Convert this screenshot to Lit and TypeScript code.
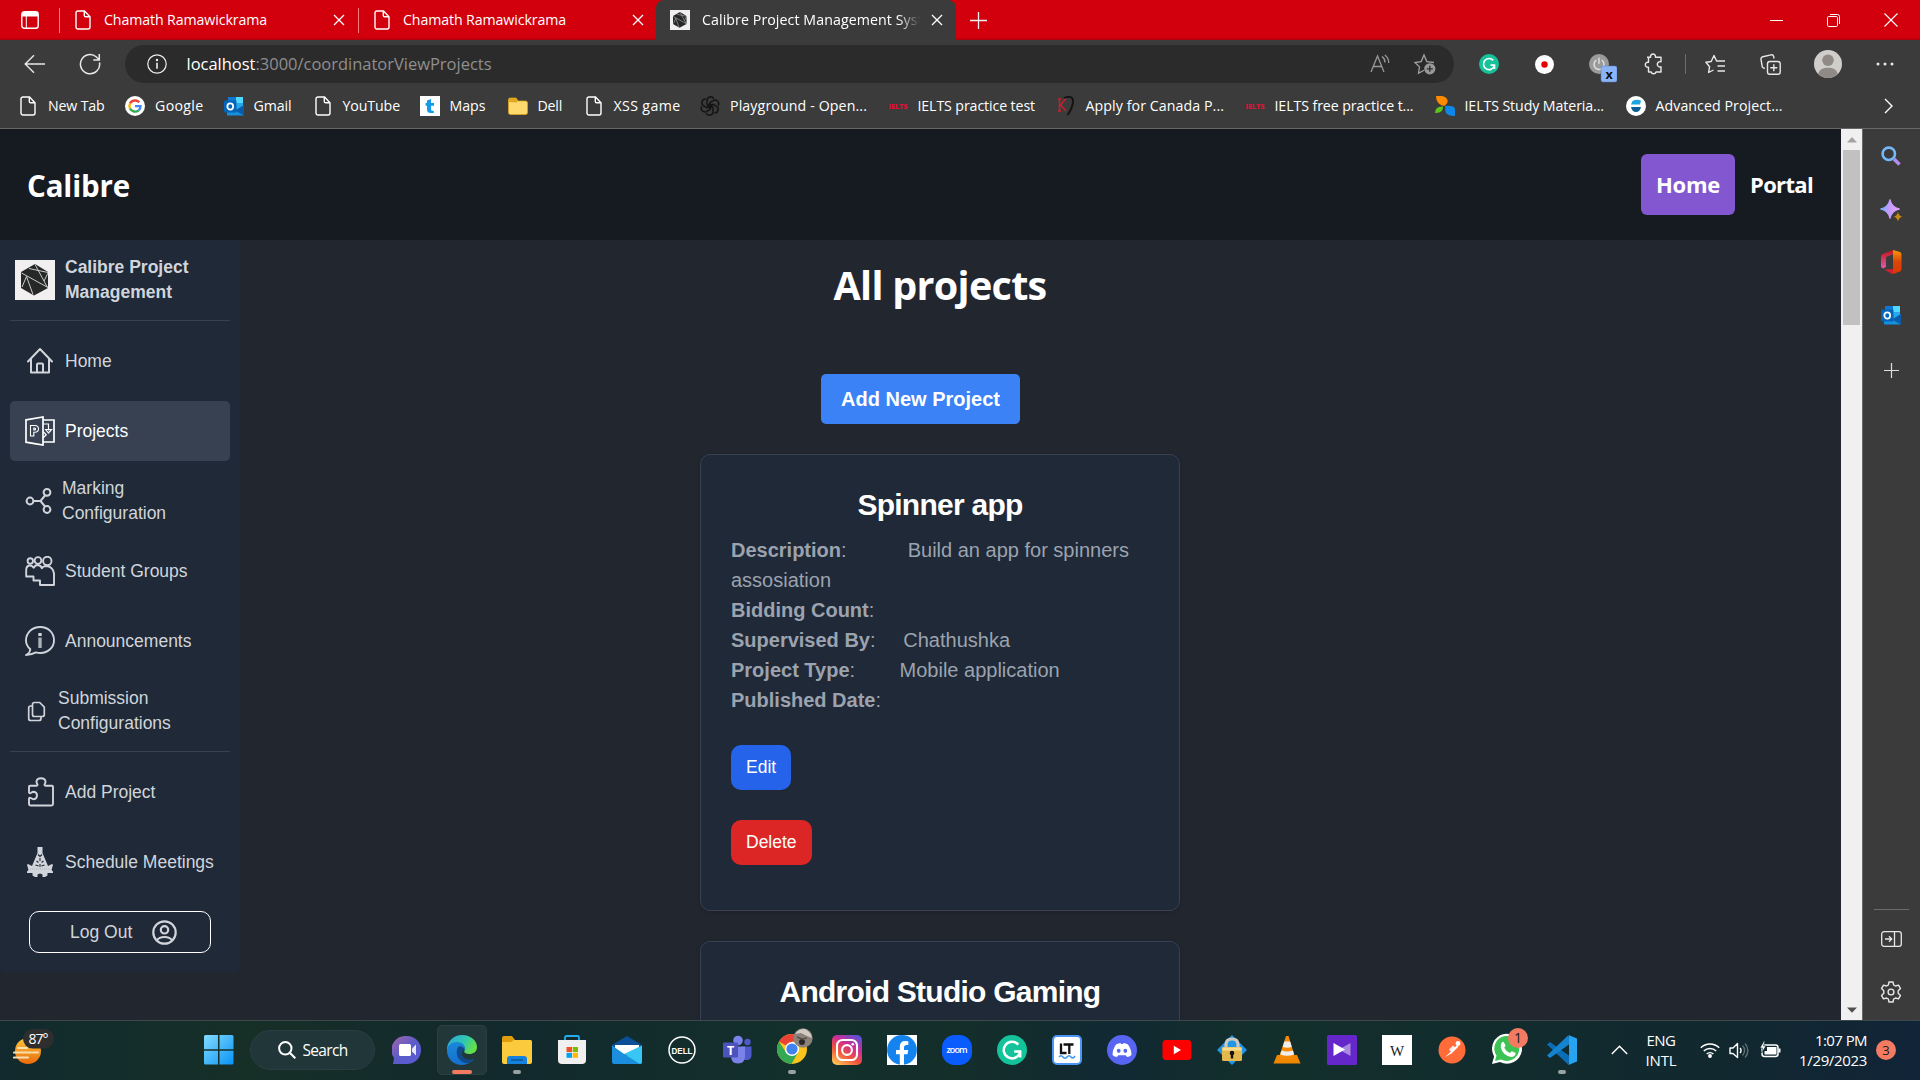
import { LitElement, html, css, nothing } from "lit";

/* Single line of text whose tracking is adjusted to span a given width. */
class FitText extends LitElement {
  static properties = { t: { type: String }, w: { type: Number } };
  declare t: string;
  declare w: number;
  static styles = css`
    :host { display: block; width: max-content; white-space: pre; flex: none; }
  `;
  constructor() {
    super();
    this.t = "";
    this.w = 0;
  }
  render() {
    return html`${this.t}`;
  }
  updated() {
    this.style.letterSpacing = "0px";
    const natural = this.getBoundingClientRect().width;
    if (this.w && natural) {
      this.style.letterSpacing = `${((this.w - natural) / this.t.length).toFixed(3)}px`;
    }
  }
}
customElements.define("fit-text", FitText);

const fit = (t: string, w: number) => html`<fit-text .t=${t} .w=${w}></fit-text>`;

/* ---------- browser chrome icons ---------- */
const pageIcon = html`<svg width="16" height="20" viewBox="0 0 16 20" fill="none" stroke="#fff" stroke-width="1.4"><path d="M1 3a2 2 0 0 1 2-2h6.5L15 6.8V17a2 2 0 0 1-2 2H3a2 2 0 0 1-2-2z"/><path d="M9.3 1v4.5a1.3 1.3 0 0 0 1.300 1.300H15"/></svg>`;
const closeIcon = html`<svg width="12" height="12" viewBox="0 0 12 12" stroke="#fff" stroke-width="1.300"><path d="M1 1l10 10M11 1L1 11"/></svg>`;
const tabActions = html`<svg width="18" height="18" viewBox="0 0 18 18"><rect x=".8" y=".8" width="16.400" height="16.400" rx="2.500" fill="none" stroke="#fff" stroke-width="1.400"/><path d="M1 5.500V3a2 2 0 0 1 2-2h12a2 2 0 0 1 2 2v2.500z" fill="#fff"/><path d="M5.300 5v12" stroke="#fff" stroke-width="1"/></svg>`;
const logo = (s: number) => html`<svg width=${s} height=${s} viewBox="0 0 40 40"><rect width="40" height="40" fill="#f1eff0"/><path d="M20 4l13 8v16l-14 7.500L6 28V12z" fill="#262727"/><path d="M6.500 13L33 27.500M20 4.500L29 21l4-8M7 27l4.500-10.500L18 34.500M14 8.500L33 12.500M29 21l3.500 6.500" stroke="#dcdcdc" stroke-width=".9" fill="none"/></svg>`;
const plus = html`<svg width="17" height="17" viewBox="0 0 17 17" stroke="#eee" stroke-width="1.300"><path d="M8.500 0v17M0 8.500h17"/></svg>`;
const backIcon = html`<svg width="22" height="20" viewBox="0 0 22 20" fill="none" stroke="#e8e8e8" stroke-width="1.400"><path d="M21 10H1.500M10 1.200L1.200 10l8.800 8.800"/></svg>`;
const reloadIcon = html`<svg width="22" height="22" viewBox="0 0 22 22" fill="none" stroke="#e8e8e8" stroke-width="1.500"><path d="M20.500 9.500A9.600 9.600 0 1 1 17.400 4L20 6.500M20.300 1v6h-6"/></svg>`;
const infoIcon = html`<svg width="20" height="20" viewBox="0 0 20 20" fill="none" stroke="#eee" stroke-width="1.200"><circle cx="10" cy="10" r="9.200"/><path d="M10 8.800v6" stroke-width="1.600"/><circle cx="10" cy="6" r=".6" fill="#eee"/></svg>`;
const readIcon = html`<svg width="20" height="20" viewBox="0 0 20 20" fill="none" stroke="#989898" stroke-width="1.300"><path d="M1 18L7.500 2 14 18M3.200 12.500h8.600M12 2.500a7 7 0 0 1 3 6M14.800 1a10 10 0 0 1 4 8"/></svg>`;
const starAdd = html`<svg width="22" height="22" viewBox="0 0 22 22" fill="none" stroke="#a0a0a0" stroke-width="1.300"><path d="M10 17.300L4.500 20.200l1-6.300L1 9.500l6.200-.9L10 2l2.800 6.600L20 9.500"/><circle cx="15.800" cy="15.800" r="5.600" fill="#989898" stroke="none"/><path d="M15.800 12.800v6M12.800 15.800h6" stroke="#2b2b2b"/></svg>`;
const gIcon = (s: number) => html`<svg width=${s} height=${s} viewBox="0 0 30 30"><circle cx="15" cy="15" r="15" fill="#15c39a"/><path d="M21.300 9.600A8.300 8.300 0 1 0 23 17.500M23.200 22.500V16.600h-6" fill="none" stroke="#fff" stroke-width="2.500"/></svg>`;
const recIcon = html`<svg width="19" height="19" viewBox="0 0 19 19"><circle cx="9.500" cy="9.500" r="9.500" fill="#fff"/><circle cx="9.500" cy="9.500" r="3.200" fill="#e60000"/></svg>`;
const powerIcon = html`<svg width="28" height="30" viewBox="0 0 28 30"><circle cx="10" cy="11" r="10" fill="#9b9b9b"/><path d="M7.300 7.200a5 5 0 1 0 5.400 0M10 4.800v6" stroke="#ddd" stroke-width="1.500" fill="none"/><rect x="12" y="13" width="16" height="16" rx="2" fill="#8ab4f8" stroke="#5a7fc0" stroke-width=".5"/><text x="20" y="26" text-anchor="middle" font-family="Open Sans, sans-serif" font-weight="700" font-size="12.500" fill="#111">x</text></svg>`;
const extIcon = html`<svg width="20" height="22" viewBox="0 0 20 22" fill="none" stroke="#e8e8e8" stroke-width="1.400" stroke-linejoin="round"><path d="M3 4.200h3.600a2.500 2.500 0 1 1 4.800 0H17v4.600a2.700 2.700 0 1 0 0 5V19h-5a2.500 2.500 0 0 1-4.800 0H4.500v-4.800a2.500 2.500 0 1 1 0-4.800V4.200"/></svg>`;
const favIcon = html`<svg width="21" height="20" viewBox="0 0 21 20" fill="none" stroke="#e8e8e8" stroke-width="1.400" stroke-linejoin="round"><path d="M8.500 16L3.600 18.500l1-5.800L.9 8.300l5.300-.8L9 1.500l2.600 5.500H20M12.500 12H20M12.500 17H20"/></svg>`;
const collIcon = html`<svg width="21" height="21" viewBox="0 0 21 21" fill="none" stroke="#e8e8e8" stroke-width="1.400"><rect x="7.500" y="7.500" width="12.700" height="12.700" rx="2.300"/><path d="M13.800 10.300v7M10.300 13.800h7M4.800 14.500L3.300 13.800a2 2 0 0 1-1.200-2L1 5.400A2.300 2.300 0 0 1 2.800 2.800L11 .9a2.300 2.300 0 0 1 2.700 1.700L14 4.500"/></svg>`;
const avatarIcon = html`<svg width="28" height="28" viewBox="0 0 28 28"><circle cx="14" cy="14" r="14" fill="#d0cecb"/><circle cx="14" cy="10.200" r="5.800" fill="#8f8a86"/><path d="M4.300 24.100C5.500 19 9 17.800 14 17.800s8.500 1.200 9.700 6.300A14 14 0 0 1 14 28a14 14 0 0 1-9.700-3.900z" fill="#8f8a86"/></svg>`;
const dotsIcon = html`<svg width="18" height="4" viewBox="0 0 18 4" fill="#e8e8e8"><circle cx="2" cy="2" r="1.500"/><circle cx="9" cy="2" r="1.500"/><circle cx="16" cy="2" r="1.500"/></svg>`;
const minIcon = html`<svg width="13" height="13" viewBox="0 0 13 13" stroke="#fff" stroke-width="1"><path d="M0 6.500h13"/></svg>`;
const maxIcon = html`<svg width="13" height="13" viewBox="0 0 13 13" fill="none" stroke="#fff" stroke-width="1"><rect x=".5" y="2.500" width="10" height="10" rx="1.200"/><path d="M3 .5h7.500a2 2 0 0 1 2 2V10"/></svg>`;
const winClose = html`<svg width="14" height="14" viewBox="0 0 14 14" stroke="#fff" stroke-width="1.100"><path d="M.5.5l13 13M13.500.5l-13 13"/></svg>`;

/* ---------- bookmark icons (20px) ---------- */
const google = html`<svg width="20" height="20" viewBox="0 0 20 20" fill="none" stroke-width="2.400"><circle cx="10" cy="10" r="10" fill="#fff"/><path d="M14.200 6.300A5.600 5.600 0 0 0 5 7.600" stroke="#ea4335"/><path d="M5 7.500a5.600 5.600 0 0 0 0 5" stroke="#fbbc05"/><path d="M5 12.400a5.600 5.600 0 0 0 8.700 1.900" stroke="#34a853"/><path d="M13.700 14.300a5.300 5.300 0 0 0 1.800-4.200H10" stroke="#4285f4"/></svg>`;
const outlook = html`<svg width="20" height="20" viewBox="0 0 20 20"><rect x="4" y="1" width="15" height="13" fill="#28a8ea"/><path d="M12 1h7v6h-7z" fill="#50d9ff"/><path d="M4 1h8v6H4z" fill="#0f78d4"/><path d="M3 19.500V11l8 4 9-6v9.500a1 1 0 0 1-1 1z" fill="#1490df"/><path d="M20 9v9.500a1 1 0 0 1-.5.800L11 14.500z" fill="#0a5ba8"/><rect x="0" y="4.500" width="12.500" height="12" rx="1" fill="#0364b8"/><ellipse cx="6.250" cy="10.500" rx="2.900" ry="3.200" fill="none" stroke="#fff" stroke-width="1.800"/></svg>`;
const tIcon = html`<svg width="20" height="20" viewBox="0 0 20 20"><rect width="20" height="20" fill="#fff"/><path d="M7 4.500L11 3v4h3v2.800h-3v3.600q0 1.300 1.300 1.300h1.500V17h-3Q7 17 7 13.500V9.800H5.600V7H7z" fill="#149be8"/></svg>`;
const folder = html`<svg width="20" height="20" viewBox="0 0 20 20"><path d="M.5 4a2 2 0 0 1 2-2H8l2 3h7.500a2 2 0 0 1 2 2v9.500a2 2 0 0 1-2 2h-15a2 2 0 0 1-2-2z" fill="#ffd96e" stroke="#d9a520" stroke-width=".8"/><path d="M.5 6V4a2 2 0 0 1 2-2H8l2 3-1.500 1.500z" fill="#e0a81e"/></svg>`;
const openai = html`<svg width="20" height="20" viewBox="0 0 20 20" fill="none" stroke="#141414" stroke-width="1.500">${[0, 60, 120, 180, 240, 300].map((a) => html`<svg x="0" y="0" width="20" height="20" overflow="visible"><path transform="rotate(${a} 10 10)" d="M7 8.500V4.600a3.600 3.600 0 0 1 6.800-1.800M7 8.500l6 3.300"/></svg>`)}</svg>`;
const ielts = html`<svg width="20" height="20" viewBox="0 0 20 20"><text x="10" y="13" text-anchor="middle" font-family="Open Sans, sans-serif" font-weight="800" font-size="7.500" fill="#d81336" textLength="19">IELTS</text></svg>`;
const kIcon = html`<svg width="18" height="20" viewBox="0 0 18 20" fill="none"><path d="M7 2Q15-1 16 4q.5 7-5.500 15" stroke="#141414" stroke-width="2"/><path d="M2.500 3v12M9 2.500L3.500 9 9 15M1 3h3M1 15h3" stroke="#c7202d" stroke-width="1.500"/></svg>`;
const leaf = html`<svg width="20" height="20" viewBox="0 0 20 20"><path d="M1 0q9-1 11 3 2 4-3 7Q1 8 1 0z" fill="#ff8a00"/><path d="M10 10q9-1 10 3v7q-8 0-9.500-4z" fill="#1086e8"/><path d="M0 17q0-7 8-6.500.5 7-8 6.500z" fill="#5cc41c"/></svg>`;
const adv = html`<svg width="20" height="20" viewBox="0 0 20 20"><circle cx="10" cy="10" r="10" fill="#fff"/><path d="M5 8.500L6.500 5q4-2 8.500-.5l-1 4z" fill="#1aa7e0"/><path d="M5 11h10q-1 5-5 5t-5-5z" fill="#0b5f96"/></svg>`;

const bookmarks: [unknown, string, number, number][] = [
  [pageIcon, "New Tab", 56.5, 107], [google, "Google", 48.5, 98.5], [outlook, "Gmail", 38, 89], [pageIcon, "YouTube", 57.5, 107],
  [tIcon, "Maps", 36, 88], [folder, "Dell", 24.5, 76], [pageIcon, "XSS game", 67, 116.5], [openai, "Playground - Open...", 137, 187.5],
  [ielts, "IELTS practice test", 117.5, 168], [kIcon, "Apply for Canada P...", 138.5, 189], [ielts, "IELTS free practice t...", 139, 190],
  [leaf, "IELTS Study Materia...", 139.5, 191], [adv, "Advanced Project...", 127, 160],
];

/* ---------- edge sidebar icons ---------- */
const sSearch = html`<svg width="20" height="20" viewBox="0 0 20 20" fill="none"><path d="M13 13l5.500 5.500" stroke="#b48cf0" stroke-width="3.600"/><circle cx="7.800" cy="7.800" r="6.200" stroke="#74b9fb" stroke-width="2.600"/></svg>`;
const sSpark = html`<svg width="23" height="23" viewBox="0 0 23 23"><defs><linearGradient id="spk" x1="0" x2="1"><stop offset="0" stop-color="#7ab0ff"/><stop offset=".5" stop-color="#c99bff"/><stop offset="1" stop-color="#e6a9ff"/></linearGradient></defs><path d="M10 .5q1.800 7.700 9.500 9.500-7.700 1.800-9.500 9.500Q8.200 11.800.5 10 8.200 8.200 10 .5z" fill="url(#spk)" stroke="url(#spk)" stroke-width="1"/><path d="M18 13q.8 4 4.500 4.800-3.700.8-4.500 4.700-.8-3.900-4.500-4.700Q17.200 17 18 13z" fill="#c98a10"/></svg>`;
const sOffice = html`<svg width="21" height="24" viewBox="0 0 21 24"><defs><linearGradient id="of1" y1="0" y2="1" x1="0" x2="0"><stop offset="0" stop-color="#c01818"/><stop offset="1" stop-color="#e35bb0"/></linearGradient><linearGradient id="of2" y1="0" y2="1" x1="0" x2="0"><stop offset="0" stop-color="#f59a08"/><stop offset=".5" stop-color="#dc4408"/><stop offset="1" stop-color="#d83b01"/></linearGradient></defs><path d="M12 0L1.500 4Q0 5 0 7v10l2 1.500L5 17V8q0-1 1-1.500L13 4z" fill="url(#of1)"/><path d="M12 0l7 2q1.500.5 1.500 2.500V19q0 2-1.500 2.500L12 24z" fill="url(#of2)"/><path d="M3.500 19.500L12 19v5q-1 0-2-.5z" fill="#d3202f"/></svg>`;
const sPanel = html`<svg width="21" height="16" viewBox="0 0 21 16" fill="none" stroke="#e8e8e8" stroke-width="1.300"><rect x=".7" y=".7" width="19.600" height="14.600" rx="2.300"/><path d="M13.500 1v14M4 8h6M8 5.300L10.700 8 8 10.700"/></svg>`;
const sGear = html`<svg width="22" height="22" viewBox="0 0 22 22" fill="none" stroke="#e8e8e8" stroke-width="1.400" stroke-linejoin="round"><path d="M9 1h4l.7 3 1.800 1 3-.9 2 3.500-2.300 2.100v2.600l2.300 2.100-2 3.500-3-.9-1.800 1L13 21H9l-.7-3-1.800-1-3 .9-2-3.500 2.300-2.100V9.700L1.500 7.600l2-3.500 3 .9 1.800-1z"/><circle cx="11" cy="11" r="2.900"/></svg>`;

/* ---------- navigation icons ---------- */
const nHome = html`<svg width="30" height="30" viewBox="0 0 30 30" fill="none" stroke="#d1d5db" stroke-width="2" stroke-linejoin="round" stroke-linecap="round"><path d="M3 15.500L15 3l12 12.500M6 13v13.500h18V13M12 26v-7.500q0-1 1-1h4q1 0 1 1V26"/></svg>`;
const nProj = html`<svg width="30" height="30" viewBox="0 0 30 30" fill="none" stroke="#fff" stroke-width="1.700"><path d="M1 3.800L18 1v28L1 26.200zM18 4h11v22H18"/><path d="M5.500 9.500h4.200q3.800 0 3.800 3.300 0 3.400-3.800 3.400H8.800V20H5.500zM8.800 12v2h.8q1 0 1-1t-1-1z" stroke-width="1.100"/><path d="M18 8h5.500v6.500M20.700 13.500h5.800l-3 3.500zM18 15.500l3.300 3.200L18 22" stroke-width="1.200"/></svg>`;
const nShare = html`<svg width="27" height="30" viewBox="0 0 27 30" fill="none" stroke="#d1d5db" stroke-width="2"><circle cx="5" cy="15" r="3.400"/><circle cx="22" cy="6.300" r="3.400"/><circle cx="22" cy="23.500" r="3.400"/><path d="M8.500 15h7l4.500-5.500M15.500 15l4.500 5.500"/></svg>`;
const nGroups = html`<svg width="30" height="30" viewBox="0 0 30 30" fill="none" stroke="#d1d5db" stroke-width="1.900" stroke-linejoin="round"><circle cx="5.300" cy="5" r="2.700"/><circle cx="13" cy="4.500" r="3.400"/><circle cx="22.300" cy="5" r="4.200"/><path d="M17 11.500q2-1.500 5-1.500 6 1 7 7.500v11.500H15v-4.500H8.500v-4H1.200V14q0-4.500 4-4.500 2 0 3.500 2.300Q10 9 13 9q3 .3 4.300 4"/></svg>`;
const nInfo = html`<svg width="30" height="30" viewBox="0 0 30 30" fill="none" stroke="#d1d5db" stroke-width="1.900" stroke-linejoin="round"><path d="M5.300 23.200Q1 19.500 1 14.300C1 7 7 1 15.200 1S29 7 29 14.200 23 27 15.500 27q-2.500 0-4.500-.6Q6 29 1 29q4-2 4.300-5.800z"/><path d="M15 11.500V22" stroke-width="3.400" stroke="#a9b0b9"/><path d="M15 7v3" stroke-width="3.400"/></svg>`;
const nCopy = html`<svg width="23" height="30" viewBox="0 0 23 30" fill="none" stroke="#d1d5db" stroke-width="1.700" stroke-linejoin="round"><path d="M7.500 8.500a2 2 0 0 1 2-2h5.200l4.600 4.600v7.400a2 2 0 0 1-2 2H9.500a2 2 0 0 1-2-2zM7.500 10H5.700a2 2 0 0 0-2 2v10.500a2 2 0 0 0 2 2H14a2 2 0 0 0 2-2v-2"/></svg>`;
const nPuzzle = html`<svg width="30" height="30" viewBox="0 0 30 30" fill="none" stroke="#d1d5db" stroke-width="1.900" stroke-linejoin="round"><path d="M4 15.500V9.800q0-1 1-1h6.500q1.700-.6.600-2.100-.7-1-.6-2.200Q12 1.300 16 1.300t4.500 3.200q.1 1.200-.6 2.200-1.100 1.500.6 2.100H27q1 0 1 1V27q0 1.500-1.500 1.500h-21Q4 28.500 4 27v-5.500q.5-1.300 2.200-.2 1.200.9 2.500.9 3.300-.4 3.300-3.700t-3.300-3.700q-1.300 0-2.500.9Q4.500 16.800 4 15.500z"/></svg>`;
const nTower = html`<svg width="30" height="30" viewBox="0 0 30 30"><path d="M12.500 0h5v6l5.500 13 4-2 1 .8-1.500 5.200 1.500 1.500V26h-5.500v2.500L20 30h-2.500v-2.500l-2.500-1-2.500 1V30H10l-2.500-1.500V26H2v-1.500l1.500-1.500L2 17.800l1-.8 4 2L12.500 6z" fill="#d1d5db"/><path d="M13 7.500l2 2 2-2M15 11v3M11.500 14l2 1.500M18.500 14l-2 1.500M10.500 18l3 1M19.500 18l-3 1M15 17v3" stroke="#1f2937" stroke-width="1.100" fill="none"/><path d="M5 22h20" stroke="#9aa2b0" stroke-width=".7" stroke-dasharray="1 1"/></svg>`;
const nUser = html`<svg width="25" height="25" viewBox="0 0 25 25" fill="none" stroke="#d1d5db" stroke-width="2.200"><circle cx="12.500" cy="12.500" r="11.200"/><circle cx="12.500" cy="9.800" r="3.700"/><path d="M5 20.300Q7 17 12.500 17t7.500 3.300"/></svg>`;

/* ---------- taskbar icons (30px) ---------- */
const weather = html`<svg width="42" height="42" viewBox="0 0 42 42"><defs><linearGradient id="sun" x1="0" y1="0" x2="0" y2="1"><stop offset="0" stop-color="#ffc53a"/><stop offset="1" stop-color="#ea6a0a"/></linearGradient></defs><circle cx="15" cy="26" r="13" fill="url(#sun)"/><path d="M5 23h9M17 22h10M1 27.500h17M20 27.500h5M1 32.500h14" stroke="#f5dfb0" stroke-width="2.200" stroke-linecap="round"/><rect x="10" y="4" width="31" height="19.500" rx="9.700" fill="#2e2e2e"/><text x="25.500" y="18.500" text-anchor="middle" font-family="Open Sans, sans-serif" font-size="14" fill="#fff" textLength="20">87°</text></svg>`;
const start = html`<svg width="30" height="30" viewBox="0 0 30 30"><defs><linearGradient id="win" x1="0" y1="0" x2="1" y2="1"><stop offset="0" stop-color="#84dcff"/><stop offset="1" stop-color="#0893f5"/></linearGradient></defs><path d="M1.500 0H14v14.300H0V1.500A1.500 1.500 0 0 1 1.500 0zM15.500 0h12.500A1.500 1.500 0 0 1 29.500 1.500v12.800h-14zM0 15.700h14V29.500H1.500A1.500 1.500 0 0 1 0 28zM15.500 15.700h14V28a1.500 1.500 0 0 1-1.500 1.500H15.500z" fill="url(#win)"/></svg>`;
const lens = html`<svg width="18" height="18" viewBox="0 0 18 18" fill="none" stroke="#fff" stroke-width="2"><circle cx="7.300" cy="7.300" r="6.200"/><path d="M11.800 11.800l5.500 5.500"/></svg>`;
const meet = html`<svg width="30" height="30" viewBox="0 0 30 30"><defs><linearGradient id="mt" x1="0" y1="0" x2="1" y2="1"><stop offset="0" stop-color="#a566a8"/><stop offset=".5" stop-color="#5b5bc8"/><stop offset="1" stop-color="#5a5ad6"/></linearGradient></defs><path d="M15 1a14 14 0 1 1 0 28H1l1-6A14 14 0 0 1 15 1z" fill="url(#mt)"/><rect x="7" y="9" width="12" height="12" rx="1.500" fill="#fff"/><path d="M20 13.500l4-4v11l-4-4z" fill="#e6e6ff"/></svg>`;
const edge = html`<svg width="30" height="30" viewBox="0 0 30 30"><defs><linearGradient id="e1" x1="0" y1="0" x2="1" y2=".4"><stop offset="0" stop-color="#2da5de"/><stop offset=".6" stop-color="#2fc7b0"/><stop offset="1" stop-color="#62df4a"/></linearGradient><linearGradient id="e2" x1="0" y1="0" x2="0" y2="1"><stop offset="0" stop-color="#1a88d8"/><stop offset="1" stop-color="#1470ce"/></linearGradient></defs><path d="M0 14A15 14.500 0 0 1 15 0c9 0 15 6 15 12 0 5-4 7-7.500 7-4 0-6-1.500-5-3.500C19 12 16 8 11 8.500 5 9 1 13 0 17z" fill="url(#e1)"/><path d="M0 16c0-6 5-9 10-9 6 0 9 4 7.500 8-4-3-9 7 1 10.500 4 1 7-1 8.500-2C25 27 20 30 15 30 6 30 0 23 0 16z" fill="url(#e2)"/><path d="M11 12c-4 8 2 17 11 16 3-1.500 4.500-3.500 5.500-5-4 2.500-10 2-12-2-1.500-3 .5-6 2-6.500-1-3-5-4-6.500-2.500z" fill="#114a8b"/></svg>`;
const explorer = html`<svg width="30" height="28" viewBox="0 0 30 28"><path d="M0 2a2 2 0 0 1 2-2h8l3 4H28a2 2 0 0 1 2 2v2H0z" fill="#e09d0b"/><path d="M0 6h9l3-2h16a2 2 0 0 1 2 2v20a2 2 0 0 1-2 2H2a2 2 0 0 1-2-2z" fill="#fccb3d"/><path d="M5 28v-5a3 3 0 0 1 3-3h14a3 3 0 0 1 3 3v5z" fill="#1583dc"/><path d="M9 24h12" stroke="#0b559c" stroke-width="1.500"/></svg>`;
const store = html`<svg width="30" height="30" viewBox="0 0 30 30"><path d="M8 6V2.500A1.500 1.500 0 0 1 9.500 1h11A1.500 1.500 0 0 1 22 2.500V6" fill="none" stroke="#22aef0" stroke-width="1.800"/><path d="M1 5h28v20a4 4 0 0 1-4 4H5a4 4 0 0 1-4-4z" fill="#f0f0f0"/><path d="M9.500 12H15v5H9.500z" fill="#f25022"/><path d="M15.700 12H21v5h-5.300z" fill="#7fba00"/><path d="M9.500 17.800H15v5H9.500z" fill="#00a4ef"/><path d="M15.700 17.800H21v5h-5.300z" fill="#ffb900"/></svg>`;
const mail = html`<svg width="30" height="28" viewBox="0 0 30 28"><path d="M15 0l15 9v5H0V9z" fill="#0b4f96"/><path d="M3 9h24v9H3z" fill="#fff"/><path d="M0 9.500L15 20l15-10.500V26a2 2 0 0 1-2 2H2a2 2 0 0 1-2-2z" fill="#1b8fdd"/><path d="M30 9.500V26a2 2 0 0 1-2 2L12 18z" fill="#38c6f4"/></svg>`;
const dell = html`<svg width="30" height="30" viewBox="0 0 30 30"><circle cx="15" cy="15" r="13" fill="none" stroke="#fff" stroke-width="1.500"/><text x="15" y="18.500" text-anchor="middle" font-family="Liberation Sans, sans-serif" font-weight="700" font-size="9.500" fill="#fff" textLength="21" lengthAdjust="spacingAndGlyphs">DELL</text></svg>`;
const teams = html`<svg width="30" height="30" viewBox="0 0 30 30"><circle cx="16" cy="5.500" r="4.800" fill="#7b83eb"/><circle cx="25.500" cy="7" r="3.200" fill="#5059c9"/><path d="M20 11.500h9.500V20q0 5-5 5H20z" fill="#5059c9"/><path d="M9 11.500h14V21q0 7.500-7 7.500T9 21z" fill="#7b83eb"/><rect x="1" y="7.500" width="15" height="15" rx="1.300" fill="#4b53bc"/><text x="8.500" y="19.500" text-anchor="middle" font-family="Open Sans, sans-serif" font-weight="700" font-size="12.500" fill="#fff">T</text></svg>`;
const chrome = html`<svg width="36" height="42" viewBox="0 0 36 42"><circle cx="15" cy="21" r="15" fill="#fcc31e"/><path d="M15 21L2 13.500A15 15 0 0 1 28 13.500H15z" fill="#ea4335"/><path d="M2 13.500A15 15 0 0 0 14.500 36L21 24.500l-12 0z" fill="#34a853"/><circle cx="15" cy="21" r="7" fill="#fff"/><circle cx="15" cy="21" r="5.600" fill="#3f82f0"/><circle cx="26" cy="10" r="9.700" fill="#8d8279"/><path d="M18 6q4-5.500 10-5 6 3 7 9l-5-2-6-3z" fill="#cfcac2"/><circle cx="25" cy="14" r="3" fill="#2c2a29"/><path d="M20 9l5 2 5-1" stroke="#57504a" stroke-width="1.500" fill="none"/></svg>`;
const insta = html`<svg width="30" height="30" viewBox="0 0 30 30"><defs><linearGradient id="ig" x1=".2" y1="1" x2=".8" y2="0"><stop offset="0" stop-color="#fdc055"/><stop offset=".35" stop-color="#f2543a"/><stop offset=".65" stop-color="#cf2e92"/><stop offset="1" stop-color="#5b50d8"/></linearGradient></defs><rect width="30" height="30" rx="5" fill="url(#ig)"/><g fill="none" stroke="#fff" stroke-width="2.100"><rect x="5" y="5" width="20" height="20" rx="5.500"/><circle cx="15" cy="15" r="4.900"/></g><circle cx="20.800" cy="9.300" r="1.300" fill="#fff"/></svg>`;
const fb = html`<svg width="30" height="30" viewBox="0 0 30 30"><rect width="30" height="30" fill="#fff"/><circle cx="15" cy="15" r="14.900" fill="#1583ee"/><path d="M12.800 30V19.300H9V15h3.800v-3.300q0-5.700 5.500-5.700l3 .3V10h-1.800Q17 10 17 12.500V15h4.200l-.7 4.300H17V30z" fill="#fff"/></svg>`;
const zoomI = html`<svg width="30" height="30" viewBox="0 0 30 30"><rect width="30" height="30" rx="12.500" fill="#0b5cff"/><text x="15" y="17.500" text-anchor="middle" font-family="Open Sans, sans-serif" font-weight="600" font-size="9" fill="#fff" textLength="21">zoom</text></svg>`;
const lt = html`<svg width="30" height="30" viewBox="0 0 30 30"><rect x="1" y="1" width="28" height="28" rx="4" fill="#fff" stroke="#4a95f5" stroke-width="2"/><path d="M9 8.500v9.500h5.500M11.500 9.500h10M17.300 9.500V19" stroke="#111" stroke-width="2.300" fill="none"/><path d="M7 22q2-2.500 4 0t4 0 4 0 4-1" stroke="#3a97f0" stroke-width="1.600" fill="none"/></svg>`;
const discord = html`<svg width="30" height="30" viewBox="0 0 30 30"><circle cx="15" cy="15" r="15" fill="#5865f2"/><path d="M9 9.500q2.500-1.500 4.500-1.500l.5 1h2l.5-1q2 0 4.500 1.500 3.500 5 3.500 10.500-2 1.800-4.500 2l-1.200-1.800h-7.600L10 22q-2.500-.2-4.500-2Q5.500 14.500 9 9.500z" fill="#fff"/><ellipse cx="11.700" cy="15.800" rx="1.900" ry="2.100" fill="#5865f2"/><ellipse cx="18.300" cy="15.800" rx="1.900" ry="2.100" fill="#5865f2"/></svg>`;
const yt = html`<svg width="30" height="20" viewBox="0 0 30 20"><rect width="29" height="20" x=".5" rx="3.500" fill="#f00"/><path d="M11.800 5.800v8.400l7.200-4.200z" fill="#fff"/></svg>`;
const lock = html`<svg width="30" height="30" viewBox="0 0 30 30"><path d="M15 0l15 15-15 15L0 15z" fill="#2196e6"/><path d="M9 13V9.500q0-5.500 6-5.500t6 5.500V13" fill="none" stroke="#c9c9c4" stroke-width="3.200"/><rect x="5" y="12" width="20" height="14" rx="1.500" fill="#e3b94d"/><path d="M5.500 12.500h19v3h-19z" fill="#f6dd90"/><circle cx="15" cy="18" r="2.300" fill="#17130c"/><path d="M13.800 18h2.400v5.500h-2.400z" fill="#17130c"/></svg>`;
const vlc = html`<svg width="28" height="30" viewBox="0 0 28 30"><path d="M4 20h20l3.500 8.500H.5z" fill="#f08700"/><path d="M13 1h2.500l6.500 21q-8 4-16 0z" fill="#f58a07"/><path d="M11.400 6.500h5.700l1.700 5.500q-4.500 1.500-9.100 0zM8.500 15.500q5.500 2 11.400 0l1.200 4q-7 2.500-13.800 0z" fill="#eee"/></svg>`;
const kine = html`<svg width="30" height="30" viewBox="0 0 30 30"><rect width="30" height="30" rx="1.500" fill="#6527c9"/><path d="M23.500 8v13L12 14.500z" fill="#a98ae0"/><path d="M6.500 8v13L18 14.500z" fill="#fff"/></svg>`;
const wiki = html`<svg width="30" height="30" viewBox="0 0 30 30"><rect width="30" height="30" fill="#fff"/><text x="15" y="20.500" text-anchor="middle" font-family="Liberation Serif, serif" font-size="15" fill="#222">W</text></svg>`;
const postman = html`<svg width="30" height="30" viewBox="0 0 30 30"><circle cx="15" cy="15" r="13.500" fill="#ff6c37"/><path d="M8 22l5-4.500 7-7.500 1.500 1.500-7 7z" fill="#fff"/><circle cx="21" cy="8.500" r="2.400" fill="#fff"/><path d="M12 14.500l4-4 3 2.500-4.500 4.500z" fill="#fff" opacity=".85"/></svg>`;
const whats = html`<svg width="36" height="42" viewBox="0 0 36 42"><path d="M0 36l2.100-7.600A15 15 0 1 1 8 34z" fill="#fff"/><path d="M3 33l1.500-5.500A12.500 12.500 0 1 1 9 31.500z" fill="#3bc353"/><path d="M9.500 15q1.500-2 2.500-.5l1.500 3q0 1-1.300 2.200 2 4 5.800 5.300l1.700-1.700q3 .8 4 2-.5 3.700-4.700 3.700Q10.500 27 8.800 19.500 8.500 17 9.500 15z" fill="#fff"/><circle cx="26" cy="10" r="10" fill="#f57a62"/><text x="26" y="15" text-anchor="middle" font-family="Open Sans, sans-serif" font-size="14" fill="#1a1a1a">1</text></svg>`;
const vscode = html`<svg width="30" height="30" viewBox="0 0 30 30"><path d="M3 7L0 9.500 21 29.500l3-7.500z" fill="#0b6db5"/><path d="M3 23l-3-2.500L21 .5 24 8z" fill="#1484d0"/><path d="M21.500 0L30 3.500v23L21.500 30l.5-3V3z" fill="#27a3f0"/></svg>`;

const taskApps: [unknown, string][] = [
  [meet, ""], [edge, "active"], [explorer, "open"], [store, ""], [mail, ""], [dell, ""], [teams, ""], [chrome, "open badge"], [insta, ""],
  [fb, ""], [zoomI, ""], [gIcon(30), ""], [lt, ""], [discord, ""], [yt, ""], [lock, ""], [vlc, ""], [kine, ""], [wiki, ""], [postman, ""],
  [whats, "badge"], [vscode, "open"],
];

const chevUp = html`<svg width="17" height="10" viewBox="0 0 17 10" fill="none" stroke="#fff" stroke-width="1.500"><path d="M.8 9L8.500 1.300 16.200 9"/></svg>`;
const wifi = html`<svg width="20" height="16" viewBox="0 0 20 16" fill="none" stroke="#fff" stroke-width="1.500"><path d="M.8 5.800a13 13 0 0 1 18.400 0M3.800 9a8.700 8.700 0 0 1 12.400 0M6.700 12a4.700 4.700 0 0 1 6.600 0"/><circle cx="10" cy="14" r="1.200" fill="#fff"/></svg>`;
const vol = html`<svg width="20" height="17" viewBox="0 0 20 17" fill="none" stroke="#fff" stroke-width="1.400" stroke-linejoin="round"><path d="M1 6h3l4.500-4.500v14L4 11.500H1z"/><path d="M11 6a3.500 3.500 0 0 1 0 5"/><path d="M13.500 3.500a7 7 0 0 1 0 10M16 1.500a10 10 0 0 1 0 14" stroke="#5d7073"/></svg>`;
const battery = html`<svg width="21" height="18" viewBox="0 0 21 18"><rect x="2" y="4" width="16" height="11.500" rx="2.500" fill="none" stroke="#fff" stroke-width="1.500"/><path d="M7 6h9.500v7.500h-12V10H7z" fill="#fff"/><path d="M18.500 7.500h2v4h-2z" fill="#fff"/><path d="M4 0L0 7h2.500L1.500 12 6 5H3.500L5 0z" fill="#fff" stroke="#12292e" stroke-width=".6"/></svg>`;

class AppRoot extends LitElement {
  static styles = css`
    :host { display: block; width: 1920px; height: 1080px; overflow: hidden; --ui: "Open Sans", "Noto Sans", sans-serif; --arial: "Liberation Sans", Arial, sans-serif; font-family: var(--ui); color: #fff; }
    * { box-sizing: border-box; }
    svg { display: block; flex: none; }
    .screen { display: grid; grid-template-rows: 40px 48px 40px 892px 60px; grid-template-columns: 1920px; width: 1920px; height: 1080px; background: #3b3b3b; }
    .c { display: flex; align-items: center; justify-content: center; flex: none; }

    .tabs { display: flex; background: #d1000c; font-size: 14.2px; align-items: stretch; box-shadow: inset 0 -2px 2px -1px #a8000c; }
    .tabbtn { width: 59px; padding-left: 1px; }
    .tab { display: flex; align-items: center; width: 299px; padding-left: 16px; position: relative; }
    .tab::before { content: ""; position: absolute; left: 0; top: 8px; width: 1px; height: 25px; background: #ff7d84; }
    .tab .name { margin-left: 13px; width: 218px; padding-bottom: 1px; }
    .tab .x { width: 34px; }
    .tab.active { width: 300px; margin-left: -1px; background: #3b3b3b; border-radius: 8px 8px 0 0; padding-left: 14px; }
    .tab.active::before { display: none; }
    .tab.active .name { margin-left: 12px; overflow: hidden; width: 218px; -webkit-mask-image: linear-gradient(90deg, #000 90%, transparent 100%); mask-image: linear-gradient(90deg, #000 90%, transparent 100%); }
    .newtab { width: 44px; }
    .grow { flex: 1; }
    .wc { width: 57.5px; }

    .toolbar { display: flex; align-items: center; }
    .back { width: 70px; } .reload { width: 40px; }
    .address { display: flex; align-items: center; flex: none; width: 1329px; height: 38px; margin-left: 15px; border-radius: 19px; background: #2b2b2b; padding-left: 22px; font-size: 16.5px; color: #8f8f8f; }
    .address .host { color: #fff; margin-left: 19.500px; padding-bottom: 1px; }
    .address .path { padding-bottom: 1px; }
    .read { width: 44px; } .star { width: 46px; margin-right: 6px; }
    .ext { width: 55px; }
    .address + .ext { margin-left: 7.5px; }
    .sep { width: 1px; height: 20px; flex: none; background: #6b6b6b; margin: 0 2px 0 3px; }
    .av { width: 60px; } .dots { width: 54px; }
    .power { padding: 7px 0 0 8px; }

    .marks { display: flex; align-items: center; height: 36px; padding-left: 18px; font-size: 14.2px; }
    .mark { display: flex; align-items: center; flex: none; }
    .mark .ic { width: 20px; margin-right: 10px; }
    .mark fit-text { padding-bottom: 1px; }
    .marks .more { margin-left: auto; width: 64px; }

    .body { display: grid; grid-template-columns: 1841px 21px 58px; border-top: 1px solid #676767; overflow: hidden; }
    .page { background: #22262e; display: grid; grid-template-rows: 111px 780px; overflow: hidden; }
    .top { background: #161b22; display: flex; align-items: center; padding: 0 28px 0 27px; font-weight: 700; }
    .brand { font-size: 29.5px; padding-top: 2px; }
    .links { margin-left: auto; display: flex; font-size: 22px; align-items: center; }
    .links fit-text { padding-bottom: 2px; }
    .hbtn { width: 94px; height: 61px; border-radius: 6px; background: #8257d0; margin-right: 15px; }
    .cols { display: flex; align-items: flex-start; }

    .nav { width: 240px; height: 732px; flex: none; background: #1f2937; border-radius: 0 0 5px 5px; padding: 0 10px; font: 17.5px/25px var(--arial); color: #d1d5db; }
    .who { display: flex; height: 81px; align-items: center; padding: 0 0 0 5px; font-weight: 700; border-bottom: 1px solid #374151; gap: 10px; }
    .item { display: flex; align-items: center; gap: 10px; height: 60px; padding-left: 15px; margin-top: 10px; border-radius: 5px; }
    .item.on { background: #374151; color: #fff; }
    .rule { height: 1px; background: #374151; margin-top: 10px; }
    .logout { display: flex; align-items: center; width: 182px; height: 42px; margin: 19px 0 0 19px; border: 1px solid #fff; border-radius: 10px; padding-left: 40px; gap: 20px; }

    .main { width: 480px; margin-left: 460px; flex: none; display: flex; flex-direction: column; }
    .main h1 { margin: 0; font: 700 39.5px/54px var(--ui); height: 134px; padding-top: 18px; display: flex; justify-content: center; align-items: flex-start; }
    .add { align-self: flex-start; margin: 0 0 30px 121px; width: 199px; height: 50px; border-radius: 5px; background: #3b82f6; font: 700 20px var(--arial); }
    .card { height: 457px; border: 1px solid #374151; border-radius: 10px; background: #1f2937; padding: 30px; margin-bottom: 30px; flex: none; font: 20px/30px var(--arial); color: #9ca3af; box-shadow: 0 1px 4px rgba(0,0,0,.15); }
    .card h5 { margin: 0 0 10px; text-align: center; font-size: 30px; line-height: 40px; letter-spacing: -.75px; color: #fff; }
    .btn { display: flex; align-items: center; height: 45px; width: max-content; border-radius: 10px; padding: 0 15px 1px; color: #fff; font-size: 17.5px; margin-top: 30px; }
    .edit { background: #2563eb; } .del { background: #dc2626; }

    .scroll { background: #f0f0f0; display: grid; grid-template-rows: 21px 175px 1fr 21px; justify-items: center; }
    .thumb { width: 17px; background: #c1c1c1; }
    .rail { border-left: 1px solid #676767; display: grid; grid-template-rows: 54px 54px 50px 56px 55px 1fr 1px 58px 47px 5px; justify-items: center; padding: 1px 1px 0 0; margin-top: -1px; }
    .rail .line { width: 35px; background: #6c6c6c; }

    .task { display: flex; align-items: stretch; border-top: 1px solid #3d4a4b; font-size: 15px; background: linear-gradient(90deg, #12292d 0, #132d2c 5%, #162f27 13%, #12292d 26%, #13302c 42%, #142e2a 50%, #112933 58%, #132f2b 66%, #122c2e 78%, #11282f 90%, #112438 100%); }
    .wx { padding: 4px 0 0 13px; width: 194px; }
    .st { width: 50px; padding-bottom: 1px; }
    .search { width: 125px; height: 40px; align-self: center; border-radius: 20px; background: #213639; border: 1px solid #2a3e41; margin: 0 4px 1px 6px; gap: 7px; font-size: 15.5px; }
    .app { display: flex; align-items: center; justify-content: center; width: 55px; position: relative; flex: none; padding-bottom: 1px; }
    .app.badge { align-items: flex-start; padding: 7px 0 0 6px; }
    .app.active::before { content: ""; position: absolute; z-index: 0; inset: 4px 2px 5px 3px; border-radius: 5px; background: #22373a; border: 1px solid #2a3f42; }
    .app svg { position: relative; }
    .app.active::after, .app.open::after { content: ""; position: absolute; left: 24px; bottom: 6px; width: 8px; height: 4px; border-radius: 2px; background: #99a2a3; }
    .app.active::after { left: 18px; width: 20px; background: #f57a62; }
    .tray { display: flex; align-items: center; flex: 1; padding-bottom: 1px; }
    .up { width: 52px; padding-left: 9px; }
    .net { width: 48px; padding-left: 10px; }
    .bat { width: 42px; }
    .lang { display: flex; flex-direction: column; align-items: center; line-height: 20px; width: 40px; flex: none; }
    .clock { display: flex; flex-direction: column; align-items: flex-end; line-height: 20px; width: 76px; flex: none; }
    .note { width: 20px; height: 20px; border-radius: 50%; background: #f57a62; color: #1a1a1a; font-size: 13px; margin-left: 9px; }
  `;

  item(icon: unknown, label: unknown, on = false) {
    return html`<div class="item ${on ? "on" : ""}">${icon}<span>${label}</span></div>`;
  }

  row(label: string, gap = 0, value = "") {
    return html`<div><b>${label}</b>:${value ? "\u00a0".repeat(gap) + value : nothing}</div>`;
  }

  render() {
    return html`<div class="screen">
      <div class="tabs">
        <div class="c tabbtn">${tabActions}</div>
        <div class="tab">${pageIcon}<div class="name">${fit("Chamath Ramawickrama", 163)}</div><div class="c x">${closeIcon}</div></div>
        <div class="tab">${pageIcon}<div class="name">${fit("Chamath Ramawickrama", 163)}</div><div class="c x">${closeIcon}</div></div>
        <div class="tab active">${logo(20)}<div class="name">${fit("Calibre Project Management System", 242)}</div><div class="c x">${closeIcon}</div></div>
        <div class="c newtab">${plus}</div><div class="grow"></div>
        <div class="c wc">${minIcon}</div><div class="c wc">${maxIcon}</div><div class="c wc">${winClose}</div>
      </div>
      <div class="toolbar">
        <div class="c back">${backIcon}</div><div class="c reload">${reloadIcon}</div>
        <div class="address">${infoIcon}<div class="host">${fit("localhost", 69)}</div><div class="path">${fit(":3000/coordinatorViewProjects", 236)}</div>
          <div class="grow"></div><div class="c read">${readIcon}</div><div class="c star">${starAdd}</div></div>
        <div class="c ext">${gIcon(20)}</div><div class="c ext">${recIcon}</div><div class="c ext power">${powerIcon}</div><div class="c ext">${extIcon}</div>
        <div class="sep"></div>
        <div class="c ext">${favIcon}</div><div class="c ext">${collIcon}</div><div class="c av">${avatarIcon}</div><div class="c dots">${dotsIcon}</div>
      </div>
      <div class="marks">
        ${bookmarks.map(([ic, t, w, cell]) => html`<div class="mark" style="width:${cell}px"><div class="c ic">${ic}</div>${fit(t, w)}</div>`)}
        <div class="c more"><svg width="9" height="16" viewBox="0 0 9 16" fill="none" stroke="#fff" stroke-width="1.400"><path d="M1 1l7 7-7 7"/></svg></div>
      </div>
      <div class="body">
        <div class="page">
          <div class="top"><div class="brand">${fit("Calibre", 103)}</div>
            <div class="links"><div class="c hbtn">${fit("Home", 64)}</div>${fit("Portal", 63)}</div></div>
          <div class="cols">
            <div class="nav">
              <div class="who">${logo(40)}<span>Calibre Project<br />Management</span></div>
              ${this.item(nHome, "Home")}
              ${this.item(nProj, "Projects", true)}
              ${this.item(nShare, html`Marking<br />Configuration`)}
              ${this.item(nGroups, "Student Groups")}
              ${this.item(nInfo, "Announcements")}
              ${this.item(nCopy, html`Submission<br />Configurations`)}
              <div class="rule"></div>
              ${this.item(nPuzzle, "Add Project")}
              ${this.item(nTower, "Schedule Meetings")}
              <div class="logout">Log Out${nUser}</div>
            </div>
            <div class="main">
              <h1>${fit("All projects", 213)}</h1>
              <div class="c add">Add New Project</div>
              <div class="card">
                <h5>Spinner app</h5>
                ${this.row("Description", 11, "Build an app for spinners assosiation")}
                ${this.row("Bidding Count")}
                ${this.row("Supervised By", 5, "Chathushka")}
                ${this.row("Project Type", 8, "Mobile application")}
                ${this.row("Published Date")}
                <div class="btn edit">Edit</div>
                <div class="btn del">Delete</div>
              </div>
              <div class="card"><h5>Android Studio Gaming</h5></div>
            </div>
          </div>
        </div>
        <div class="scroll">
          <div class="c"><svg width="10" height="6" viewBox="0 0 10 6"><path d="M5 0l5 5.500H0z" fill="#a3a3a3"/></svg></div>
          <div class="thumb"></div><div></div>
          <div class="c"><svg width="10" height="6" viewBox="0 0 10 6"><path d="M0 .5h10L5 5.800z" fill="#505050"/></svg></div>
        </div>
        <div class="rail">
          <div class="c">${sSearch}</div><div class="c">${sSpark}</div><div class="c">${sOffice}</div><div class="c">${outlook}</div>
          <div class="c"><svg width="15" height="15" viewBox="0 0 15 15" stroke="#ddd" stroke-width="1.200"><path d="M7.500 0v15M0 7.500h15"/></svg></div>
          <div></div><div class="line"></div><div class="c">${sPanel}</div><div class="c">${sGear}</div>
        </div>
      </div>
      <div class="task">
        <div class="wx">${weather}</div>
        <div class="c st">${start}</div>
        <div class="c search">${lens}${fit("Search", 45)}</div>
        ${taskApps.map(([ic, cls]) => html`<div class="app ${cls}">${ic}</div>`)}
        <div class="tray">
          <div class="c up">${chevUp}</div>
          <div class="lang">${fit("ENG", 29)}${fit("INTL", 31)}</div>
          <div class="c net">${wifi}</div>${vol}<div class="c bat">${battery}</div>
          <div class="clock">${fit("1:07 PM", 52)}${fit("1/29/2023", 68)}</div>
          <div class="c note">3</div>
        </div>
      </div>
    </div>`;
  }
}
customElements.define("app-root", AppRoot);
